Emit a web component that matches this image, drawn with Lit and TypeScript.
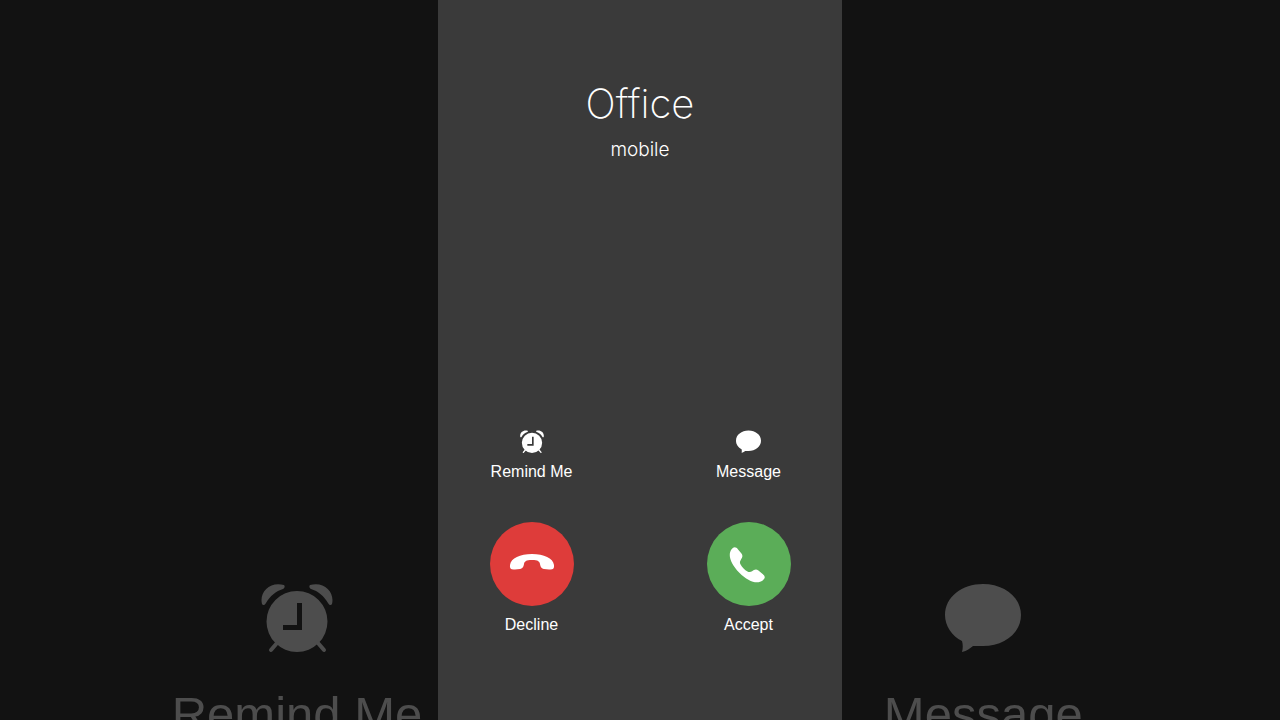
import { LitElement, html, css, svg } from "lit";
import { customElement } from "lit/decorators.js";

const alarmIcon = svg`
  <path d="M1 21C-2 9 9-2 23 2C24 3 24 5 22 6C15 8 9 13 5 20C4 22 2 23 1 21Z"/>
  <path d="M71 21C74 9 63-2 49 2C48 3 48 5 50 6C57 8 63 13 67 20C68 22 70 23 71 21Z"/>
  <path d="M16 60L10 67M57 60L63 67" stroke="currentColor" stroke-width="4" stroke-linecap="round"/>
  <path fill-rule="evenodd" d="M36 8a30.500 30.500 0 1 0 0 61a30.500 30.500 0 1 0 0-61ZM36 20h5v27h-19v-5h14Z"/>`;

const bubbleIcon = svg`
  <path d="M38 1C59 1 76 14 76 32C76 50 59 63 38 63C34 63 31 63 28 63C25 65 22 68 17 69C18 65 18 62 17 58C7 53 0 43 0 32C0 14 17 1 38 1Z"/>`;

const handsetPath = svg`
  <path d="M1 11C2 4 11 0 23 0S44 4 45 11C45.500 14.500 44 16 40 15.500L35 15C32 14.500 31.500 12.500 31 10C30.500 7.500 29 6 23 6S15.500 7.500 15 10C14.500 12.500 14 14.500 11 15L6 15.500C2 16 .500 14.500 1 11Z"/>`;

@customElement("app-root")
export class AppRoot extends LitElement {
  static styles = css`
    :host {
      display: block;
      position: relative;
      min-height: 100vh;
      overflow: hidden;
      background: #121212;
      color: #fff;
      font-family: "Liberation Sans", Arial, sans-serif;
    }
    svg {
      display: block;
      fill: currentColor;
    }
    .backdrop {
      position: absolute;
      inset: 0;
      overflow: hidden;
      display: flex;
      justify-content: center;
      align-items: flex-end;
      gap: 436px;
      color: #4d4d4d;
    }
    .ghost {
      flex: 0 0 250px;
      height: 137px;
      display: flex;
      flex-direction: column;
      align-items: center;
      gap: 29px;
      font-size: 49px;
      line-height: 60px;
      white-space: nowrap;
    }
    .ghost svg {
      flex: none;
      height: 72px;
    }
    .phone {
      position: relative;
      box-sizing: border-box;
      width: 100%;
      max-width: 404px;
      min-height: 100vh;
      margin: 0 auto;
      padding: 76px 0 85px;
      display: flex;
      flex-direction: column;
      justify-content: space-between;
      background: #3a3a3a;
    }
    .caller {
      text-align: center;
      font-family: Inter, "Liberation Sans", sans-serif;
    }
    .name {
      margin: 0;
      font-size: 40px;
      line-height: 56px;
      font-weight: 200;
    }
    .line {
      margin: 6px 0 0;
      font-size: 19px;
      line-height: 24px;
      font-weight: 300;
    }
    .actions {
      display: grid;
      grid-template-columns: 84px 84px;
      justify-content: center;
      column-gap: 133px;
      row-gap: 40px;
    }
    button {
      display: flex;
      flex-direction: column;
      align-items: center;
      padding: 0;
      border: 0;
      background: none;
      color: inherit;
      font: inherit;
      font-size: 16px;
      line-height: 20px;
      white-space: nowrap;
      cursor: pointer;
    }
    .quick {
      gap: 8px;
    }
    .call {
      gap: 9px;
    }
    .disc {
      display: grid;
      place-items: center;
      width: 84px;
      height: 84px;
      border-radius: 50%;
    }
    .decline {
      background: #de3c3a;
    }
    .accept {
      background: #5bad58;
    }
  `;

  render() {
    return html`
      <div class="backdrop" aria-hidden="true">
        <div class="ghost">
          <svg width="72" viewBox="0 0 72 72">${alarmIcon}</svg>
          <span>Remind Me</span>
        </div>
        <div class="ghost">
          <svg width="76" viewBox="0 0 76 72">${bubbleIcon}</svg>
          <span>Message</span>
        </div>
      </div>
      <main class="phone">
        <header class="caller">
          <h1 class="name">Office</h1>
          <p class="line">mobile</p>
        </header>
        <div class="actions">
          <button class="quick" type="button">
            <svg width="24" height="24" viewBox="0 0 72 72">${alarmIcon}</svg>
            <span>Remind Me</span>
          </button>
          <button class="quick" type="button">
            <svg width="25" height="24" viewBox="0 0 76 72">${bubbleIcon}</svg>
            <span>Message</span>
          </button>
          <button class="call" type="button">
            <span class="disc decline">
              <svg width="46" height="20" viewBox="0 0 46 20">${handsetPath}</svg>
            </span>
            <span>Decline</span>
          </button>
          <button class="call" type="button">
            <span class="disc accept">
              <svg width="46" height="46" viewBox="0 0 46 46">
                <g transform="translate(19 26) rotate(-135) translate(-23 -8)">${handsetPath}</g>
              </svg>
            </span>
            <span>Accept</span>
          </button>
        </div>
      </main>
    `;
  }
}
